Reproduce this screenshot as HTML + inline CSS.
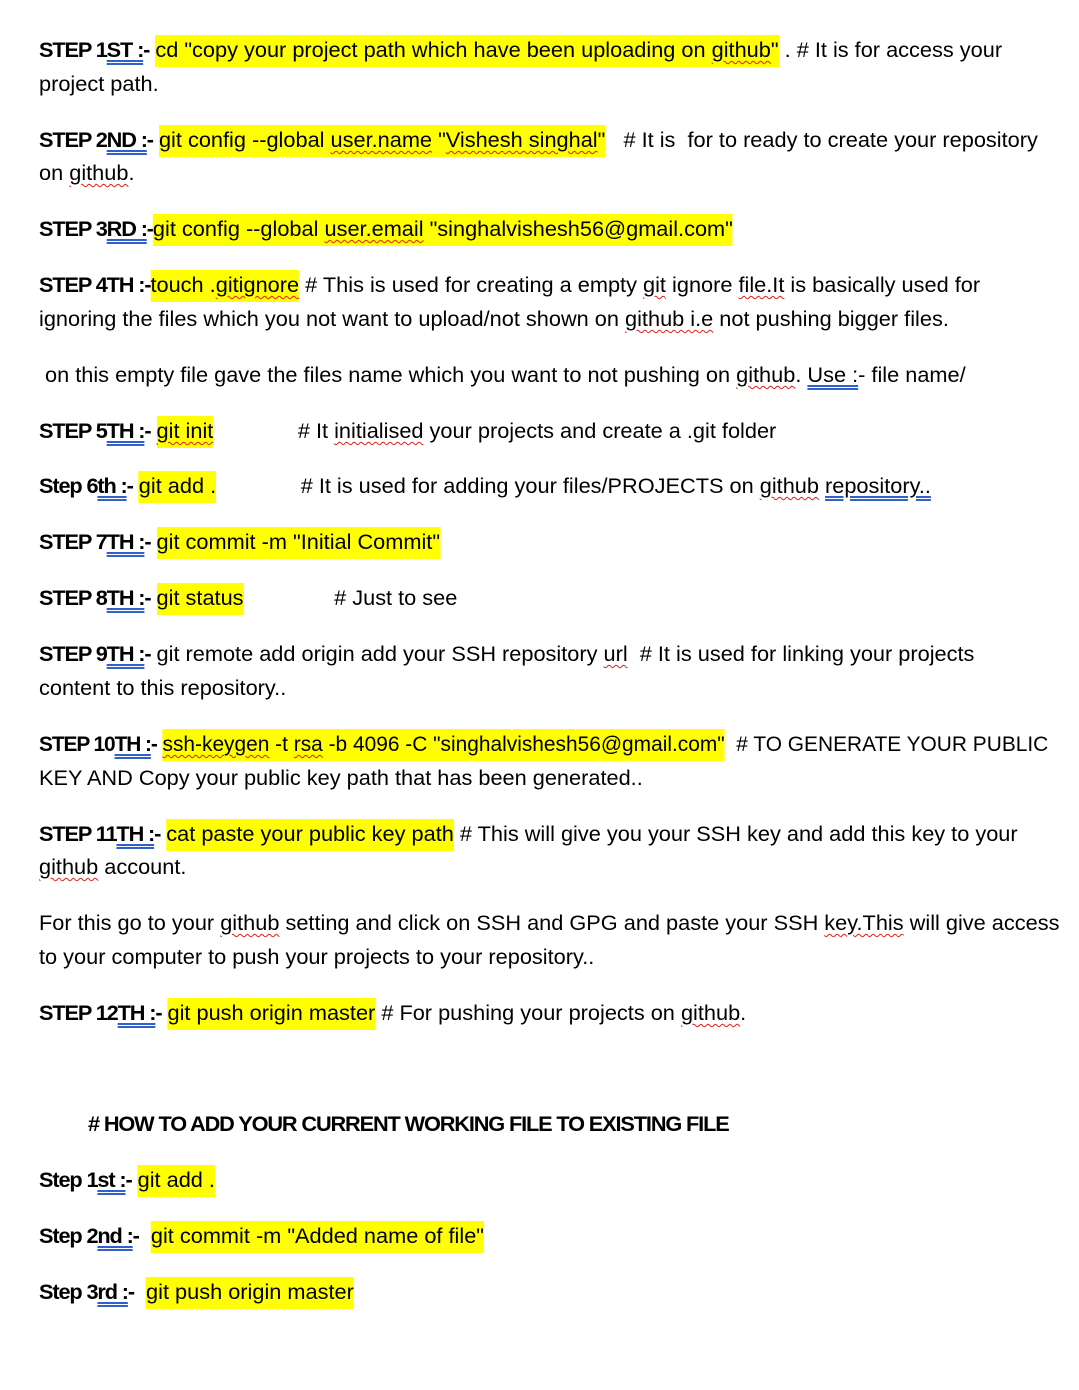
<!DOCTYPE html>
<html><head><meta charset="utf-8"><style>
body{margin:0;background:#fff;width:1079px;height:1390px;position:relative;overflow:hidden;font-family:"Liberation Sans",Arial,sans-serif;font-size:21px;color:#000}
.l{position:absolute;left:39px;white-space:nowrap;line-height:32px;transform:scaleX(1.035);transform-origin:left center}
.h{background:#ffff00;display:inline-block;line-height:32px}
b{font-weight:bold;letter-spacing:-1.1px}
.u{text-decoration:underline double #3060c8;text-underline-offset:3px}
.w{text-decoration:underline wavy #e02020;text-decoration-thickness:1px;text-underline-offset:3px}
</style></head><body>
<div class="l" style="top:35px"><b>STEP 1<span class="u">ST :</span>-</b> <span class="h">cd "copy your project path which have been uploading on <span class="w">github</span>"</span> . # It is for access your</div>
<div class="l" style="top:69px">project path.</div>
<div class="l" style="top:125px"><b>STEP 2<span class="u">ND :</span>-</b> <span class="h">git config --global <span class="w">user.name</span> "<span class="w">Vishesh singhal</span>"</span>&nbsp;&nbsp; # It is&nbsp; for to ready to create your repository</div>
<div class="l" style="top:158px">on <span class="w">github</span>.</div>
<div class="l" style="top:214px"><b>STEP 3<span class="u">RD :</span>-</b><span class="h">git config --global <span class="w">user.email</span> "singhalvishesh56@gmail.com"</span></div>
<div class="l" style="top:270px"><b>STEP 4TH :-</b><span class="h">touch .<span class="w">gitignore</span></span> # This is used for creating a empty <span class="w">git</span> ignore <span class="w">file.It</span> is basically used for</div>
<div class="l" style="top:304px">ignoring the files which you not want to upload/not shown on <span class="w">github i.e</span> not pushing bigger files.</div>
<div class="l" style="top:360px;left:45px">on this empty file gave the files name which you want to not pushing on <span class="w">github</span>. <span class="u">Use :</span>- file name/</div>
<div class="l" style="top:416px"><b>STEP 5<span class="u">TH :</span>-</b> <span class="h"><span class="w">git init</span></span>&nbsp;&nbsp;&nbsp;&nbsp;&nbsp;&nbsp;&nbsp;&nbsp;&nbsp;&nbsp;&nbsp;&nbsp;&nbsp; # It <span class="w">initialised</span> your projects and create a .git folder</div>
<div class="l" style="top:471px"><b>Step 6<span class="u">th :</span>-</b> <span class="h">git add .</span>&nbsp;&nbsp;&nbsp;&nbsp;&nbsp;&nbsp;&nbsp;&nbsp;&nbsp;&nbsp;&nbsp;&nbsp;&nbsp; # It is used for adding your files/PROJECTS on <span class="w">github</span> <span class="u">repository..</span></div>
<div class="l" style="top:527px"><b>STEP 7<span class="u">TH :</span>-</b> <span class="h">git commit -m "Initial Commit"</span></div>
<div class="l" style="top:583px"><b>STEP 8<span class="u">TH :</span>-</b> <span class="h">git status</span>&nbsp;&nbsp;&nbsp;&nbsp;&nbsp;&nbsp;&nbsp;&nbsp;&nbsp;&nbsp;&nbsp;&nbsp;&nbsp;&nbsp; # Just to see</div>
<div class="l" style="top:639px"><b>STEP 9<span class="u">TH :</span>-</b> git remote add origin add your SSH repository <span class="w">url</span>&nbsp; # It is used for linking your projects</div>
<div class="l" style="top:673px">content to this repository..</div>
<div class="l" style="top:729px;transform:scaleX(0.995)"><b>STEP 10<span class="u">TH :</span>-</b> <span class="h"><span class="w">ssh-keygen</span> -t <span class="w">rsa</span> -b 4096 -C "singhalvishesh56@gmail.com"</span>&nbsp; # TO GENERATE YOUR PUBLIC</div>
<div class="l" style="top:763px">KEY AND Copy your public key path that has been generated..</div>
<div class="l" style="top:819px"><b>STEP 11<span class="u">TH :</span>-</b> <span class="h">cat paste your public key path</span> # This will give you your SSH key and add this key to your</div>
<div class="l" style="top:852px"><span class="w">github</span> account.</div>
<div class="l" style="top:908px">For this go to your <span class="w">github</span> setting and click on SSH and GPG and paste your SSH <span class="w">key.This</span> will give access</div>
<div class="l" style="top:942px">to your computer to push your projects to your repository..</div>
<div class="l" style="top:998px"><b>STEP 12<span class="u">TH :</span>-</b> <span class="h">git push origin master</span> # For pushing your projects on <span class="w">github</span>.</div>
<div class="l" style="top:1109px;left:88px"><b># HOW TO ADD YOUR CURRENT WORKING FILE TO EXISTING FILE</b></div>
<div class="l" style="top:1165px"><b>Step 1<span class="u">st :</span>-</b> <span class="h">git add .</span></div>
<div class="l" style="top:1221px"><b>Step 2<span class="u">nd :</span>-</b>&nbsp; <span class="h">git commit -m "Added name of file"</span></div>
<div class="l" style="top:1277px"><b>Step 3<span class="u">rd :</span>-</b>&nbsp; <span class="h">git push origin master</span></div>
</body></html>
